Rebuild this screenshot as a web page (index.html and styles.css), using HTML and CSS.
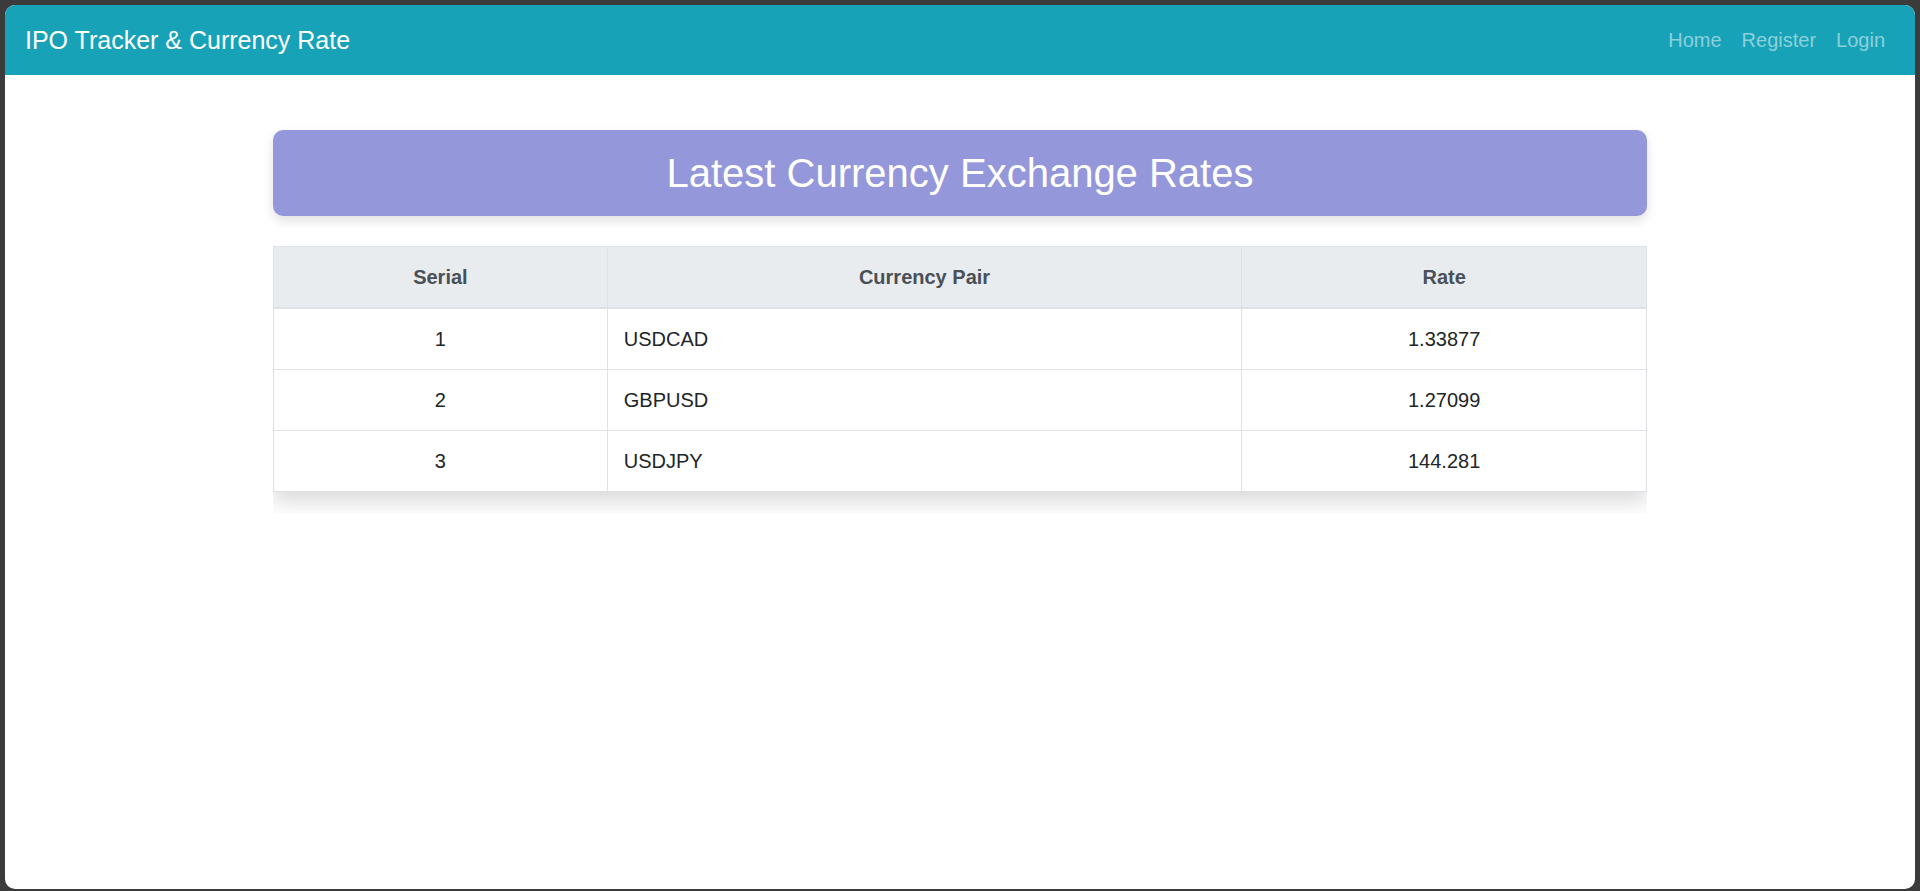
FILE: index.html
```html
<!DOCTYPE html>
<html lang="en">
<head>
<meta charset="utf-8">
<title>IPO Tracker &amp; Currency Rate</title>
<link rel="stylesheet" href="styles.css">
</head>
<body>
<div class="window">
  <nav class="navbar">
    <a class="brand" href="#">IPO Tracker &amp; Currency Rate</a>
    <ul class="nav-links">
      <li><a href="#">Home</a></li>
      <li><a href="#">Register</a></li>
      <li><a href="#">Login</a></li>
    </ul>
  </nav>
  <main class="container">
    <div class="heading-box">
      <h1>Latest Currency Exchange Rates</h1>
    </div>
    <div class="table-wrap">
      <table class="rates">
        <colgroup>
          <col class="c-serial">
          <col class="c-pair">
          <col class="c-rate">
        </colgroup>
        <thead>
          <tr><th>Serial</th><th>Currency Pair</th><th>Rate</th></tr>
        </thead>
        <tbody>
          <tr><td class="center">1</td><td>USDCAD</td><td class="center">1.33877</td></tr>
          <tr><td class="center">2</td><td>GBPUSD</td><td class="center">1.27099</td></tr>
          <tr><td class="center">3</td><td>USDJPY</td><td class="center">144.281</td></tr>
        </tbody>
      </table>
    </div>
  </main>
</div>
</body>
</html>
```
FILE: styles.css
```css
html, body {
  margin: 0;
  padding: 0;
  height: 100%;
}
body {
  background: #3b3b3b;
  font-family: "Liberation Sans", Arial, sans-serif;
  color: #212529;
  overflow: hidden;
}
.window {
  margin: 5px 5px 0 5px;
  height: 884px;
  background: #ffffff;
  border-radius: 10px;
  overflow: hidden;
}
.navbar {
  height: 70px;
  background: #17a2b8;
  display: flex;
  align-items: center;
  justify-content: space-between;
  padding: 0 20px;
}
.brand {
  color: #ffffff;
  font-size: 25px;
  line-height: 30px;
  text-decoration: none;
}
.nav-links {
  list-style: none;
  display: flex;
  margin: 0;
  padding: 0;
}
.nav-links a {
  display: block;
  padding: 0 10px;
  font-size: 20px;
  line-height: 30px;
  color: rgba(255, 255, 255, 0.5);
  text-decoration: none;
}
.container {
  width: 1374px;
  margin: 0 auto;
  padding-top: 55px;
}
.heading-box {
  background: #9497d9;
  border-radius: 10px;
  padding: 19px 0;
  box-shadow: 0 5px 12px rgba(0, 0, 0, 0.12);
  text-align: center;
}
.heading-box h1 {
  margin: 0;
  font-size: 40px;
  line-height: 48px;
  font-weight: 400;
  color: #ffffff;
}
.table-wrap {
  margin-top: 30px;
  overflow: hidden;
  padding-bottom: 21px;
}
.rates {
  width: 100%;
  border-collapse: collapse;
  font-size: 20px;
  line-height: 30px;
  box-shadow: 0 10px 20px rgba(0, 0, 0, 0.15);
  background: #ffffff;
}
.c-serial { width: 334px; }
.c-pair { width: 635px; }
.c-rate { width: 405px; }
.rates th {
  background: #e9ecef;
  color: #495057;
  font-weight: 700;
  padding: 15px;
  border: 1px solid #dee2e6;
  border-bottom-width: 2px;
  text-align: center;
}
.rates td {
  padding: 15px 16px;
  border: 1px solid #dee2e6;
  text-align: left;
}
.rates td.center {
  text-align: center;
}
```
